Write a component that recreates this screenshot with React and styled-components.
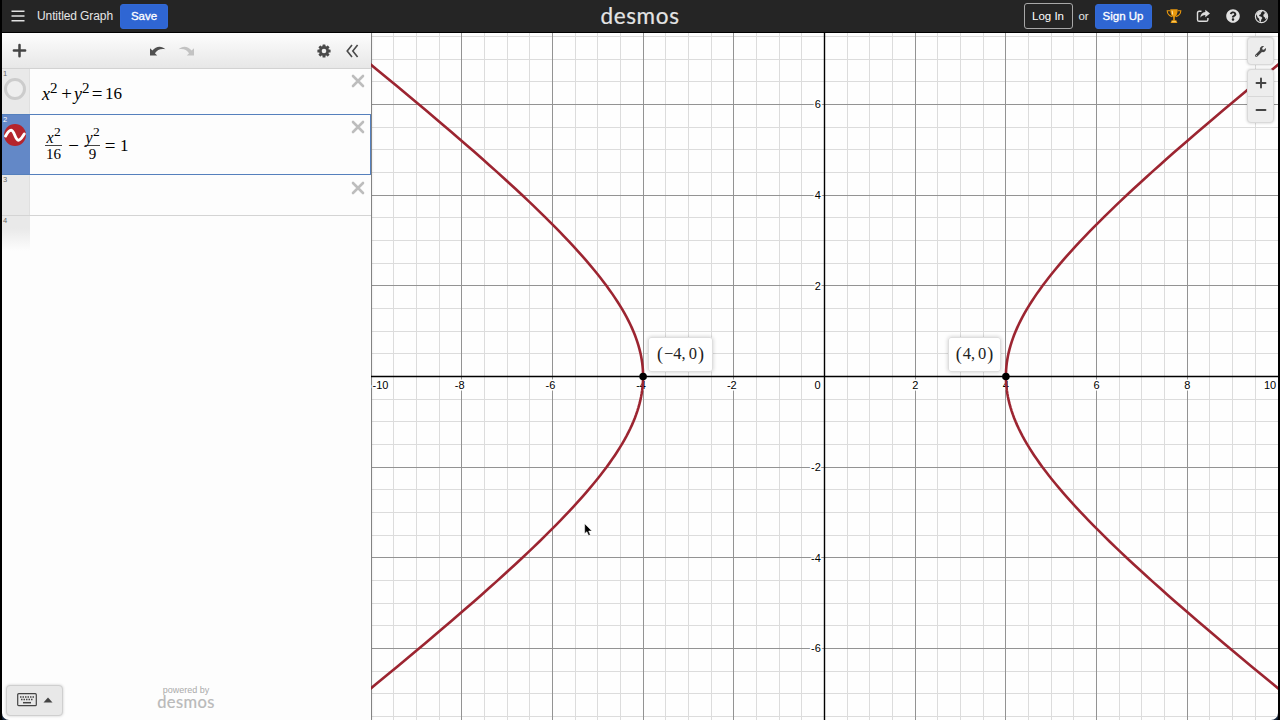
import React from 'react';
import styled, { createGlobalStyle } from 'styled-components';
import { FaQuestionCircle, FaWrench } from 'react-icons/fa';

const Global = createGlobalStyle`
  * { box-sizing: border-box; }
  body { margin: 0; background: #000; overflow: hidden; }
  button { font: inherit; padding: 0; cursor: pointer; }
  svg { display: block; flex: none; }
`;

const Window = styled.div`
  width: 1280px;
  height: 720px;
  padding: 0 2px;
  display: flex;
  flex-direction: column;
  background: #000;
  font-family: 'Liberation Sans', Arial, sans-serif;
`;

const Header = styled.header`
  height: 33px;
  flex: none;
  display: grid;
  grid-template-columns: 1fr auto 1fr;
  background: #252525;
  border-bottom: 1px solid #000;
  color: #e6e6e6;
`;

const HeaderLeft = styled.div`
  display: flex;
  align-items: center;
  padding-left: 9px;
`;

const Title = styled.span`
  margin-left: 12px;
  width: 76px;
  font-size: 12px;
  letter-spacing: -0.1px;
  line-height: 16px;
  white-space: nowrap;
`;

const HeaderButton = styled.button`
  width: ${(p) => p.$width}px;
  height: ${(p) => (p.$outlined ? 26 : 25)}px;
  border-radius: 3px;
  border: 1px solid ${(p) => (p.$outlined ? '#a8a8a8' : '#3269d6')};
  background: ${(p) => (p.$outlined ? 'transparent' : '#2f66d3')};
  color: #fff;
  font-size: 11.5px;
  line-height: 14px;
  -webkit-text-stroke: ${(p) => (p.$strong ? '0.3px #fff' : '0')};
`;

const Logo = styled.div`
  font-family: Lato, sans-serif;
  font-size: ${(p) => p.$size}px;
  line-height: ${(p) => p.$line}px;
  letter-spacing: ${(p) => p.$track}px;
  color: ${(p) => p.$color};
  -webkit-text-stroke: 0.2px ${(p) => p.$color};
`;

const HeaderRight = styled.div`
  display: flex;
  align-items: center;
  justify-content: flex-end;
  padding-right: 9px;
`;

const Or = styled.span`
  width: 22px;
  text-align: center;
  font-size: 11.5px;
`;

const HeaderIcons = styled.div`
  display: flex;
  align-items: center;
  gap: 14.5px;
  margin-left: 14px;
`;

const Main = styled.main`
  flex: 1;
  min-height: 0;
  display: flex;
  background: #16263c;
  border-radius: 0 0 2px 2px;
`;

const Panel = styled.aside`
  width: 369px;
  display: flex;
  flex-direction: column;
  background: #fdfdfd;
  border-bottom-left-radius: 7px;
  box-shadow: 0 0 3px rgba(0, 0, 0, 0.3);
  z-index: 1;
`;

const Toolbar = styled.div`
  height: 36px;
  flex: none;
  display: flex;
  align-items: center;
  padding: 0 11px 0 10px;
  background: linear-gradient(#fdfdfd, #e7e7e7);
  border-bottom: 1px solid #d2d2d2;
`;

const Group = styled.div`
  display: flex;
  align-items: center;
  gap: ${(p) => p.$gap}px;
  margin-left: ${(p) => p.$left}px;
`;

const Row = styled.div`
  height: ${(p) => p.$height}px;
  flex: none;
  display: flex;
  border-bottom: 1px solid ${(p) => (p.$active || p.$beforeActive ? '#5580bd' : '#d4d4d4')};
  border-right: ${(p) => (p.$active ? '1px solid #5580bd' : '0')};
`;

const Gutter = styled.div`
  width: 28px;
  flex: none;
  padding: 1px 0 0 1px;
  background: ${(p) => (p.$active ? '#6388c7' : '#e9e9e9')};
  border-right: 1px solid ${(p) => (p.$active ? '#6388c7' : '#e0e0e0')};
  color: ${(p) => (p.$active ? '#fff' : '#666')};
`;

const Index = styled.div`
  height: 8px;
  font-size: 7.5px;
  line-height: 8px;
`;

const Toggle = styled.div`
  width: 22px;
  height: 22px;
  margin: 0 0 0 1px;
  border: 3px solid #cccccc;
  border-radius: 50%;
  background: #eeeeee;
`;

const CurveBadge = styled.div`
  width: 22px;
  height: 22px;
  margin: 0 0 0 1px;
  border-radius: 50%;
  background: #b5242c;
`;

const Body = styled.div`
  flex: 1;
  display: flex;
  justify-content: space-between;
  padding: ${(p) => p.$pad};
`;

const Formula = styled.div`
  display: flex;
  align-items: center;
  padding-bottom: ${(p) => p.$lift ?? 0}px;
  font-family: 'Liberation Serif', 'Times New Roman', serif;
  font-size: 17.5px;
  line-height: 20px;
  color: #000;
`;

const Var = styled.i`
  width: ${(p) => p.$w}px;
  font-size: 18px;
`;

const Sup = styled.span`
  width: ${(p) => p.$w}px;
  font-size: 15px;
  line-height: 12px;
  transform: translateY(-6px);
`;

const Op = styled.span`
  width: ${(p) => p.$w}px;
  text-align: center;
  font-size: 19px;
`;

const Num = styled.span`
  font-size: 17px;
`;

const Fraction = styled.div`
  width: ${(p) => p.$w}px;
  display: flex;
  flex-direction: column;
  align-items: center;
`;

const Numerator = styled.div`
  height: 16px;
  width: 100%;
  display: flex;
  justify-content: center;
  align-items: flex-end;
  border-bottom: 1px solid #444;
  line-height: 15px;
  i { font-size: 16px; width: 7.5px; }
  span { font-size: 13.5px; transform: translateY(-6px); }
`;

const Denominator = styled.div`
  font-size: 15px;
  line-height: 16px;
`;

const FadeGutter = styled(Gutter)`
  height: 35px;
  background: linear-gradient(#e9e9e9 35%, #fdfdfd);
  border-right: 0;
`;

const PanelFoot = styled.div`
  margin-top: auto;
  height: 36px;
  display: flex;
  align-items: flex-start;
  padding-left: 4px;
`;

const KeypadButton = styled.button`
  width: 57px;
  height: 31px;
  margin-top: 1px;
  padding-bottom: 2px;
  display: flex;
  align-items: center;
  justify-content: center;
  gap: 6px;
  border: 1px solid #cfcfcf;
  border-radius: 4px;
  background: #e8e8e8;
  box-shadow: 0 0 3px rgba(0, 0, 0, 0.2);
`;

const Powered = styled.div`
  width: 60px;
  margin-left: 93px;
  padding-top: 1px;
  text-align: center;
  color: #aaa;
  font-size: 9px;
  line-height: 10px;
`;

const GraphPaper = styled.section`
  position: relative;
  width: 907px;
  height: 687px;
  background: #fefefe;
  border-bottom-right-radius: 7px;
  overflow: hidden;
`;

const PointLabel = styled.div`
  position: absolute;
  left: ${(p) => p.$x}px;
  top: 304px;
  width: ${(p) => p.$w}px;
  height: 35px;
  display: flex;
  align-items: center;
  justify-content: center;
  background: rgba(255, 255, 255, 0.95);
  border: 1px solid #dedede;
  border-radius: 3px;
  box-shadow: 0 0 4px rgba(0, 0, 0, 0.2);
  font-family: 'Liberation Serif', serif;
  font-size: 16.5px;
  line-height: 20px;
  color: #222;
  padding-bottom: 1px;
`;

const Paren = styled.span`
  font-size: 18px;
  margin: 0 1px;
`;

const Comma = styled.span`
  margin-right: 3px;
`;

const Controls = styled.div`
  position: absolute;
  right: 4px;
  top: 4px;
  display: flex;
  flex-direction: column;
  gap: 4px;
`;

const ControlGroup = styled.div`
  width: 27px;
  border-radius: 4px;
  border: 1px solid #d9d9d9;
  background: #ededed;
  box-shadow: 0 0 3px rgba(0, 0, 0, 0.2);
`;

const ControlButton = styled.button`
  width: 100%;
  height: ${(p) => p.$height ?? 26}px;
  display: flex;
  align-items: center;
  justify-content: center;
  border: 0;
  border-top: ${(p) => (p.$divided ? '1px solid #d8d8d8' : '0')};
  background: none;
  color: #444;
`;

const Cursor = styled.svg`
  position: absolute;
  left: 213px;
  top: 490px;
`;

const Close = () => (
  <svg width="14" height="14" viewBox="0 0 14 14">
    <path d="M2 2 12 12M12 2 2 12" stroke="#bdbdbd" strokeWidth="2.6" strokeLinecap="round" />
  </svg>
);

const PlusMinus = ({ size, weight, minus, color = '#444' }) => (
  <svg width={size} height={size} viewBox="0 0 12 12">
    <path d={minus ? 'M1.5 6H10.5' : 'M1.5 6H10.5M6 1.5V10.5'} stroke={color} strokeWidth={weight} strokeLinecap="round" />
  </svg>
);

const Arrow = ({ color, flip }) => (
  <svg width="17" height="12" viewBox="0 0 17 12">
    <g transform={flip ? 'translate(17 0) scale(-1 1)' : undefined}>
      <path d="M1 3.2V10.6H8.2L5.9 8.3C8.2 4.6 12 3.2 16.4 4.2C12.9.7 7 .7 3.4 5.6Z" fill={color} />
    </g>
  </svg>
);

const Gear = () => (
  <svg width="14" height="14" viewBox="0 0 14 14">
    <g fill="#4a4a4a">
      {[0, 45, 90, 135].map((a) => (
        <rect key={a} x="5.5" y="0.4" width="3" height="13.2" rx="0.6" transform={`rotate(${a} 7 7)`} />
      ))}
      <circle cx="7" cy="7" r="4.9" />
    </g>
    <circle cx="7" cy="7" r="2.3" fill="#f0f0f0" />
  </svg>
);

const Trophy = () => (
  <svg width="16" height="16" viewBox="0 0 16 16">
    <path d="M4.3 1.2H11.7C11.8 5.2 10.7 8.4 8 9.5C5.3 8.4 4.2 5.2 4.3 1.2Z" fill="#e8970c" />
    <path d="M4.3 2.8H1.2C1.3 6 3 7.8 6.2 8.6M11.7 2.8H14.8C14.7 6 13 7.8 9.8 8.6" fill="none" stroke="#e8970c" strokeWidth="1.1" />
    <path d="M7.2 9H8.8V12.2H10.3L11.4 15H4.6L5.7 12.2H7.2Z" fill="#e8970c" />
    <path d="M6.1 2.7 6.7 6.6" stroke="#fff0bd" strokeWidth="0.9" />
    <path d="M6 13.7H10" stroke="#ffdf87" strokeWidth="0.8" />
  </svg>
);

const Share = () => (
  <svg width="15" height="14" viewBox="0 0 15 14">
    <path d="M5.5 2.2H3.2Q1.5 2.2 1.5 3.9V10.7Q1.5 12.3 3.2 12.3H10.2Q11.9 12.3 11.9 10.7V8.9" fill="none" stroke="#ddd" strokeWidth="1.4" />
    <path d="M9.3.8 14 4.5 9.3 8.2V6C7.2 6 5.6 6.8 4.3 8.8C4.4 5.4 6.3 3.2 9.3 3Z" fill="#ddd" />
  </svg>
);

const Globe = () => (
  <svg width="15" height="15" viewBox="0 0 15 15">
    <circle cx="7.5" cy="7.5" r="6.1" fill="none" stroke="#ddd" strokeWidth="1.2" />
    <path d="M2.1 5.2 4.3 2.4 7.8 1.7 8.4 3 6.7 3.7 7.1 5 5.3 5.9 5.1 7.1 7.3 7.8 8.4 9.1 7.3 10.4 6.8 13 5.5 12.3 5.1 9.7 3.5 8.3 2.9 6.2ZM10.1 3.2 12.1 3.7 13.3 6.2 12.9 8.8 11.6 10.3 10.7 8.3 9.5 7.6 9.3 5.8 10.7 4.8Z" fill="#ddd" />
  </svg>
);

const Keyboard = () => (
  <svg width="20" height="14" viewBox="0 0 20 14">
    <rect x="0.7" y="0.7" width="18.6" height="12" rx="1" fill="none" stroke="#444" strokeWidth="1.2" />
    <path d="M3 4H17M4 6.6H16.5" stroke="#444" strokeWidth="1.5" strokeDasharray="1.5 1" />
    <path d="M6 9.7H14" stroke="#444" strokeWidth="1.5" />
  </svg>
);

const UNIT = 45.35;
const OX = 453.5;
const OY = 343.5;
const px = (x) => OX + x * UNIT;
const py = (y) => OY - y * UNIT;

const steps = Array.from({ length: 41 }, (_, i) => (i - 20) / 2);
const branch = (side) => {
  const points = [];
  for (let t = -1.65; t <= 1.651; t += 0.025) {
    points.push(`${px(side * 4 * Math.cosh(t)).toFixed(2)},${py(3 * Math.sinh(t)).toFixed(2)}`);
  }
  return points.join(' ');
};

const xLabels = [[-10, 9.5], [-8], [-6], [-4], [-2], [0, 446.5], [2], [4], [6], [8], [10, 899]];

const Plot = () => (
  <svg width="907" height="687" viewBox="0 0 907 687">
    {[false, true].map((major) => (
      <g key={String(major)} stroke={major ? '#939393' : '#dcdcdc'} strokeWidth="1">
        {steps.filter((v) => (v % 2 === 0) === major).map((v) => {
          const x = Math.floor(px(v)) + 0.5;
          const y = Math.floor(py(v)) + 0.5;
          return <path key={v} d={`M${x} 0V687M0 ${y}H907`} />;
        })}
      </g>
    ))}
    <path d={`M${OX} 0V687M0 ${OY}H907`} stroke="#000" strokeWidth="1.4" />
    <g fontFamily="Liberation Sans, Arial, sans-serif" fontSize="11" stroke="#fff" strokeWidth="3" paintOrder="stroke" strokeLinejoin="round">
      {xLabels.map(([v, at]) => (
        <text key={v} x={at ?? px(v) - (v < 0 ? 2 : 0)} y="355.5" textAnchor="middle">{v}</text>
      ))}
      {[6, 4, 2, -2, -4, -6].map((v) => (
        <text key={v} x="449.8" y={py(v) + 3.8} textAnchor="end">{v}</text>
      ))}
    </g>
    <g fill="none" stroke="#9c2531" strokeWidth="2.6">
      <polyline points={branch(-1)} />
      <polyline points={branch(1)} />
    </g>
    <circle cx={px(-4)} cy={OY} r="3.8" />
    <circle cx={px(4)} cy={OY} r="3.8" />
  </svg>
);

export default function App() {
  return (
    <Window>
      <Global />
      <Header>
        <HeaderLeft>
          <svg width="14" height="12" viewBox="0 0 14 12">
            <path d="M0.5 1.2H13.5M0.5 6H13.5M0.5 10.8H13.5" stroke="#e2e2e2" strokeWidth="1.6" />
          </svg>
          <Title>Untitled Graph</Title>
          <Group $left={7} $gap={0}><HeaderButton $width={48} $strong>Save</HeaderButton></Group>
        </HeaderLeft>
        <Logo $size={22.5} $line={31} $track={0.65} $color="#e4e4e4">desmos</Logo>
        <HeaderRight>
          <HeaderButton $width={49} $outlined>Log In</HeaderButton>
          <Or>or</Or>
          <HeaderButton $width={57} $strong>Sign Up</HeaderButton>
          <HeaderIcons>
            <Trophy />
            <Share />
            <FaQuestionCircle size={14} color="#e2e2e2" />
            <Globe />
          </HeaderIcons>
        </HeaderRight>
      </Header>
      <Main>
        <Panel>
          <Toolbar>
            <PlusMinus size={15} weight={2} />
            <Group $left={122} $gap={12}>
              <Arrow color="#505050" />
              <Arrow color="#c3c3c3" flip />
            </Group>
            <Group $left={122} $gap={15}>
              <Gear />
              <svg width="13" height="14" viewBox="0 0 13 14">
                <path d="M6 1 1.2 7 6 13M11.6 1 6.8 7 11.6 13" fill="none" stroke="#4a4a4a" strokeWidth="1.6" />
              </svg>
            </Group>
          </Toolbar>
          <Row $height={46} $beforeActive>
            <Gutter><Index>1</Index><Toggle /></Gutter>
            <Body $pad="5px 6px 0 12px">
              <Formula $lift={1}>
                <Var $w={8}>x</Var><Sup $w={9}>2</Sup><Op $w={15}>+</Op>
                <Var $w={8}>y</Var><Sup $w={7}>2</Sup><Op $w={16}>=</Op><Num>16</Num>
              </Formula>
              <Close />
            </Body>
          </Row>
          <Row $height={60} $active>
            <Gutter $active>
              <Index>2</Index>
              <CurveBadge>
                <svg width="22" height="22" viewBox="0 0 22 22">
                  <path d="M1.6 12C3.4 8.6 5 6 7.2 6.2C10.6 6.6 11 15.8 14.4 16.2C16.8 16.2 18.4 12.6 20.2 10" fill="none" stroke="#fff" strokeWidth="2.9" strokeLinecap="round" />
                </svg>
              </CurveBadge>
            </Gutter>
            <Body $pad="5px 5px 0 15px">
              <Formula $lift={3}>
                <Fraction $w={17}>
                  <Numerator><i>x</i><span>2</span></Numerator>
                  <Denominator>16</Denominator>
                </Fraction>
                <Op $w={23}>−</Op>
                <Fraction $w={15}>
                  <Numerator><i>y</i><span>2</span></Numerator>
                  <Denominator>9</Denominator>
                </Fraction>
                <Op $w={20}>=</Op><Num>1</Num>
              </Formula>
              <Close />
            </Body>
          </Row>
          <Row $height={41}>
            <Gutter><Index>3</Index></Gutter>
            <Body $pad="6px 6px 0 15px"><span /><Close /></Body>
          </Row>
          <FadeGutter><Index>4</Index></FadeGutter>
          <PanelFoot>
            <KeypadButton>
              <Keyboard />
              <svg width="10" height="6" viewBox="0 0 10 6"><path d="M0.5 5.5 5 0.5 9.5 5.5Z" fill="#444" /></svg>
            </KeypadButton>
            <Powered>
              powered by
              <Logo $size={16.5} $line={14} $track={0.4} $color="#b9b9b9">desmos</Logo>
            </Powered>
          </PanelFoot>
        </Panel>
        <GraphPaper>
          <Plot />
          <PointLabel $x={277} $w={65}>
            <Paren>(</Paren>−4<Comma>,</Comma>0<Paren>)</Paren>
          </PointLabel>
          <PointLabel $x={577} $w={53}>
            <Paren>(</Paren>4<Comma>,</Comma>0<Paren>)</Paren>
          </PointLabel>
          <Controls>
            <ControlGroup>
              <ControlButton><FaWrench size={11} /></ControlButton>
            </ControlGroup>
            <ControlGroup>
              <ControlButton $height={26}><PlusMinus size={12} weight={1.9} /></ControlButton>
              <ControlButton $height={26} $divided><PlusMinus size={12} weight={1.9} minus /></ControlButton>
            </ControlGroup>
          </Controls>
          <Cursor width="9" height="14" viewBox="0 0 9 14">
            <path d="M0.7 0.7V10.6L2.9 8.7 4.6 12.6 6.3 11.8 4.7 8H7.9Z" fill="#000" stroke="#fff" strokeWidth="0.5" />
          </Cursor>
        </GraphPaper>
      </Main>
    </Window>
  );
}
